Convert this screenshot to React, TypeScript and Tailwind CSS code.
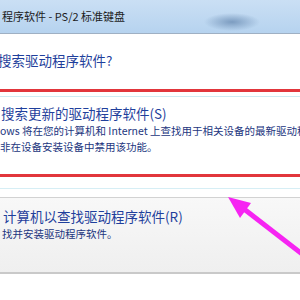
export default function App() {
  return (
    <div className="relative w-[300px] h-[300px] overflow-hidden bg-white font-['Noto_Sans_CJK_SC','Noto_Sans',sans-serif]">
      {/* 标题栏 */}
      <div className="h-[34px] border-b border-[#9fb0c3] bg-[image:radial-gradient(ellipse_28px_9px_at_232px_22px,#7c9cc0,transparent),linear-gradient(#cadff4,#b6d3ef)] pl-[2px] text-[11px] leading-[33px] text-[#1c1c1c] whitespace-nowrap">
        程序软件 - PS/2 标准键盘
      </div>

      {/* 问题 */}
      <div className="h-[55px] pt-[16px] text-[13.5px] leading-[20px] text-[#1f3f9c] whitespace-nowrap -ml-[2px]">
        搜索驱动程序软件?
      </div>

      <div className="h-[3px] bg-[#e2363c]" />
      <div className="h-[4px]" />
      <div className="h-px bg-[#cdebf3]" />

      {/* 自动搜索 */}
      <div className="h-[77px] pt-[6px] whitespace-nowrap">
        <div className="pl-[1px] text-[13.5px] leading-[20px] text-[#1f3f9c]">搜索更新的驱动程序软件(S)</div>
        <div className="text-[10.5px] leading-[16px] text-[#233680]">
          ows 将在您的计算机和 Internet 上查找用于相关设备的最新驱动程序软件。
        </div>
        <div className="text-[10.5px] leading-[16px] text-[#233680]">非在设备安装设备中禁用该功能。</div>
      </div>

      <div className="h-[3px] bg-[#e2363c]" />
      <div className="h-[11px]" />
      <div className="h-px bg-[#d6eef5]" />
      <div className="h-[8px]" />

      {/* 浏览 */}
      <div className="h-[77px] border-t border-b-2 border-t-[#d2d2d2] border-b-[#c9c9c9] bg-gradient-to-b from-[#f8f8f8] to-[#efefef] pt-[8px] whitespace-nowrap">
        <div className="pl-[3px] text-[13.5px] leading-[20px] text-[#1f3f9c]">计算机以查找驱动程序软件(R)</div>
        <div className="pl-[2px] text-[10.5px] leading-[15px] text-[#233680]">找并安装驱动程序软件。</div>
      </div>

      {/* 箭头 */}
      <svg className="absolute left-0 top-0" width="300" height="300" viewBox="0 0 300 300">
        <line x1="244" y1="209" x2="306" y2="257" stroke="#f624f2" strokeWidth="5" />
        <polygon points="228,197 251,203 240,218" fill="#f624f2" />
      </svg>
    </div>
  );
}
